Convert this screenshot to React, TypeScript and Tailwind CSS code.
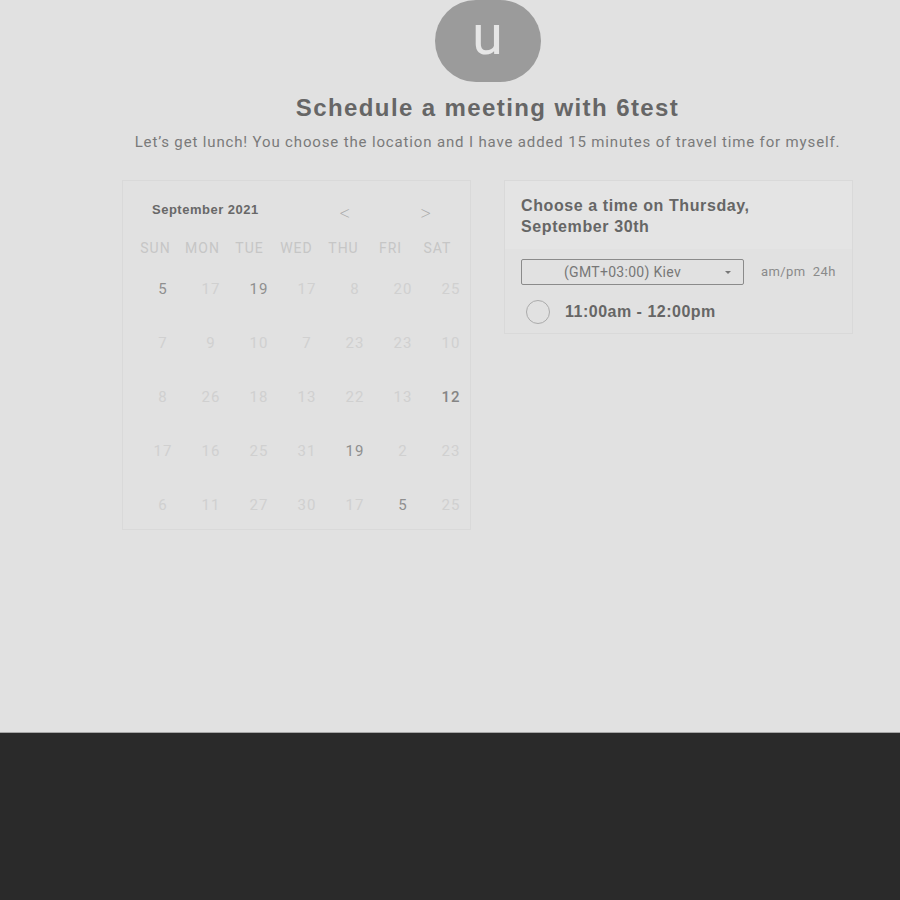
import React from "react";

const weekDays = ["SUN", "MON", "TUE", "WED", "THU", "FRI", "SAT"];

// dark = available day, otherwise faded
const weeks: { n: number; dark?: boolean; bold?: boolean }[][] = [
  [{ n: 5, dark: true }, { n: 17 }, { n: 19, dark: true }, { n: 17 }, { n: 8 }, { n: 20 }, { n: 25 }],
  [{ n: 7 }, { n: 9 }, { n: 10 }, { n: 7 }, { n: 23 }, { n: 23 }, { n: 10 }],
  [{ n: 8 }, { n: 26 }, { n: 18 }, { n: 13 }, { n: 22 }, { n: 13 }, { n: 12, dark: true, bold: true }],
  [{ n: 17 }, { n: 16 }, { n: 25 }, { n: 31 }, { n: 19, dark: true }, { n: 2 }, { n: 23 }],
  [{ n: 6 }, { n: 11 }, { n: 27 }, { n: 30 }, { n: 17 }, { n: 5, dark: true }, { n: 25 }],
];

const Calendar = () => {
  return (
    <div className="w-[349px] h-[350px] border border-[#d9d9d9]">
      {/* Header */}
      <div className="flex items-center h-[56px] pl-[29px] pt-[2px]">
        <span className="text-[13px] tracking-[0.5px] font-bold text-[#686868] [font-family:'Liberation_Sans',Arial,sans-serif]">
          September 2021
        </span>
        <span className="ml-[78px] mt-[6px] text-[18px] leading-none text-[#a8a8a8] [font-family:'DejaVu_Sans',sans-serif] font-extralight scale-x-75">
          &lt;
        </span>
        <span className="ml-[66px] mt-[6px] text-[18px] leading-none text-[#a8a8a8] [font-family:'DejaVu_Sans',sans-serif] font-extralight scale-x-75">
          &gt;
        </span>
      </div>

      {/* Weekday labels */}
      <div className="grid grid-cols-7 px-[9px] h-[22px] items-center">
        {weekDays.map((d) => (
          <div
            key={d}
            className="text-center text-[14px] tracking-[1px] text-[#c6c6c6]"
          >
            {d}
          </div>
        ))}
      </div>

      {/* Days */}
      <div className="ml-[16px] w-[336px] mt-[3px]">
        {weeks.map((row, i) => (
          <div key={i} className="grid grid-cols-7 h-[54px] items-center">
            {row.map((d, j) => (
              <div
                key={j}
                className={
                  "text-center text-[15px] tracking-[1px] " +
                  (d.dark
                    ? d.bold
                      ? "text-[#858585] font-medium"
                      : "text-[#8f8f8f]"
                    : "text-[#d0d0d0]")
                }
              >
                {d.n}
              </div>
            ))}
          </div>
        ))}
      </div>
    </div>
  );
};

const TimePanel = () => {
  return (
    <div className="w-[349px] border border-[#d9d9d9] self-start">
      <div className="bg-[#e4e4e4] px-[16px] pt-[14px] pb-[12px] text-[16px] tracking-[0.6px] leading-[21px] font-bold text-[#666] [font-family:'Liberation_Sans',Arial,sans-serif]">
        Choose a time on Thursday,
        <br />
        September 30th
      </div>
      <div className="px-[16px] pt-[10px] pb-[9px]">
        <div className="flex items-center">
          <div className="w-[223px] h-[26px] border border-[#8a8a8a] rounded-[2px] flex items-center pl-[42px] pr-[12px]">
            <span className="text-[14px] tracking-[0.3px] text-[#777] flex-1">(GMT+03:00) Kiev</span>
            <span className="w-0 h-0 border-l-[3px] border-r-[3px] border-t-[3px] border-l-transparent border-r-transparent border-t-[#777]" />
          </div>
          <span className="ml-[17px] text-[13px] text-[#8a8a8a] tracking-[0.4px]">am/pm&nbsp; 24h</span>
        </div>
        <div className="flex items-center mt-[15px] pl-[5px]">
          <span className="w-[24px] h-[24px] rounded-full border border-[#ababab]" />
          <span className="ml-[15px] text-[16px] tracking-[0.5px] font-bold text-[#666] [font-family:'Liberation_Sans',Arial,sans-serif]">
            11:00am - 12:00pm
          </span>
        </div>
      </div>
    </div>
  );
};

export default function App() {
  return (
    <div className="w-[900px] h-[900px] flex flex-col bg-[#e1e1e1] [font-family:Roboto,'Liberation_Sans',sans-serif]">
      <div className="h-[732px] shrink-0">
        <div className="ml-[122px] w-[731px] flex flex-col items-center">
          {/* Avatar */}
          <div className="w-[106px] h-[82px] rounded-full bg-[#9b9b9b] flex items-center justify-center">
            <span className="text-[56px] leading-none text-[#e6e6e6] -mt-[12px] [font-family:Roboto,'Liberation_Sans',sans-serif]">
              u
            </span>
          </div>

          <h1 className="mt-[12px] leading-[28px] text-[24px] font-bold text-[#666] tracking-[1.4px] [font-family:'Liberation_Sans',Arial,sans-serif]">
            Schedule a meeting with 6test
          </h1>
          <p className="mt-[10px] leading-[20px] text-[15px] text-[#7a7a7a] tracking-[0.85px]">
            Let’s get lunch! You choose the location and I have added 15 minutes of travel time for myself.
          </p>

          <div className="mt-[28px] w-full flex justify-between">
            <Calendar />
            <TimePanel />
          </div>
        </div>
      </div>
      <div className="flex-1 bg-[#2a2a2a] border-t border-[#a6a6a6]" />
    </div>
  );
}
